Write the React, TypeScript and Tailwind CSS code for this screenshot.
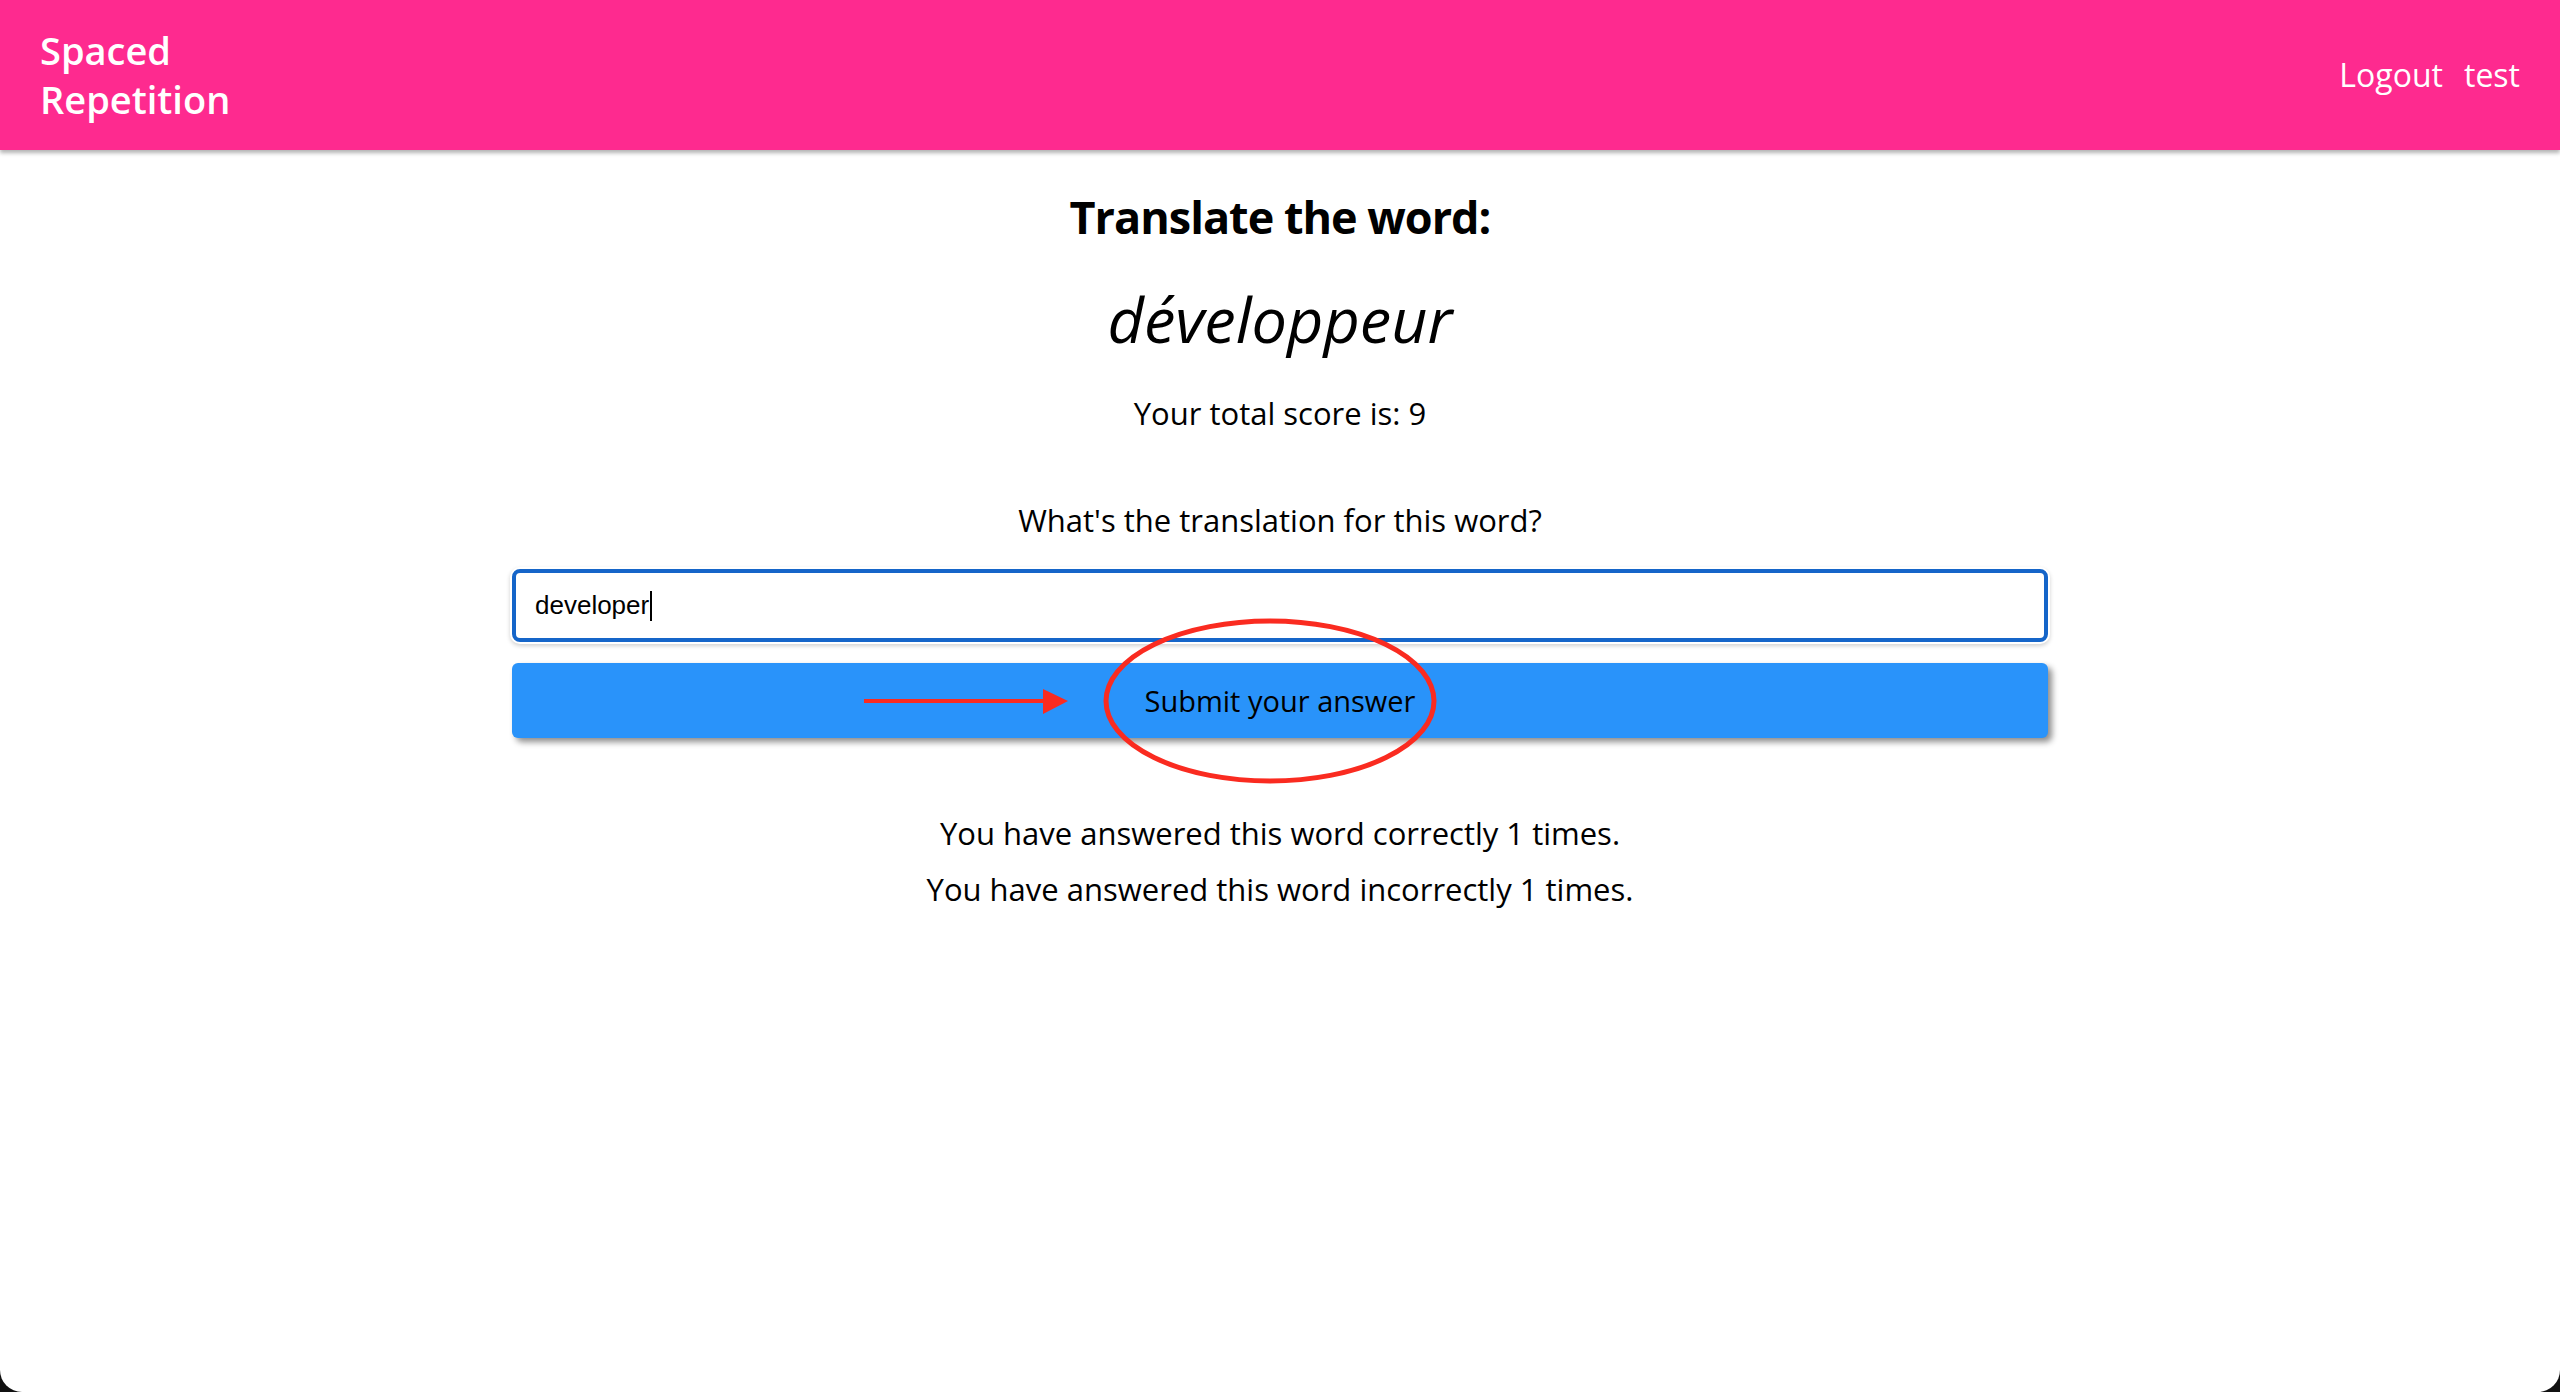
import React from "react";

const Header = () => (
  <header className="relative z-10 flex h-[150px] items-center justify-between bg-[#fe2a8f] pl-10 pr-10 shadow-[0_3px_4px_rgba(0,0,0,0.3)]">
    <h1 className="text-[38px] font-semibold leading-[49px] text-white">
      Spaced
      <br />
      Repetition
    </h1>
    <nav className="flex items-center gap-[21px] text-[32px] text-white">
      <a href="#">Logout</a>
      <span>test</span>
    </nav>
  </header>
);

const Annotation = () => (
  <svg
    className="pointer-events-none absolute left-0 top-0 overflow-visible"
    width="1536"
    height="75"
  >
    <line x1="352" y1="38" x2="535" y2="38" stroke="#fa2b20" strokeWidth="4" />
    <polygon points="531,26 556,38 531,51" fill="#fa2b20" />
    <ellipse
      cx="758"
      cy="38"
      rx="164"
      ry="80"
      fill="none"
      stroke="#fa2b20"
      strokeWidth="5"
    />
  </svg>
);

export default function App() {
  return (
    <div className="h-[1392px] bg-[#111] font-['Open_Sans',sans-serif] text-black">
      <div className="flex h-full flex-col overflow-hidden rounded-b-[22px] bg-white">
        <Header />
        <main className="flex flex-col items-center">
          <h2 className="mt-[39px] text-[45px] font-bold leading-[55px] tracking-[-1px]">
            Translate the word:
          </h2>
          <p className="mt-[41px] text-[63px] italic leading-[68px]">
            développeur
          </p>
          <p className="mt-[39px] text-[31px] leading-[43px]">
            Your total score is: 9
          </p>
          <form className="flex w-3/5 flex-col items-center">
            <label className="mt-[64px] text-[31px] leading-[43px]">
              What's the translation for this word?
            </label>
            <div className="mt-[27px] flex h-[73px] w-full items-center rounded-lg border-4 border-[#1565c9] bg-white px-[19px] font-['Liberation_Sans',Arial,sans-serif] text-[26px] shadow-[0_0_0_2px_#fff,0_2px_4px_2px_rgba(0,0,0,0.18)]">
              developer
              <span className="ml-px h-[30px] w-[2px] bg-black" />
            </div>
            <div className="relative mt-[21px] w-full">
              <button
                type="button"
                className="flex h-[75px] w-full items-center justify-center rounded-md bg-[#2993fa] text-[29px] text-black shadow-[4px_4px_6px_rgba(0,0,0,0.45)]"
              >
                Submit your answer
              </button>
              <Annotation />
            </div>
          </form>
          <p className="mt-[74px] text-[31px] leading-[43px]">
            You have answered this word correctly 1 times.
          </p>
          <p className="mt-[13px] text-[31px] leading-[43px]">
            You have answered this word incorrectly 1 times.
          </p>
        </main>
      </div>
    </div>
  );
}
